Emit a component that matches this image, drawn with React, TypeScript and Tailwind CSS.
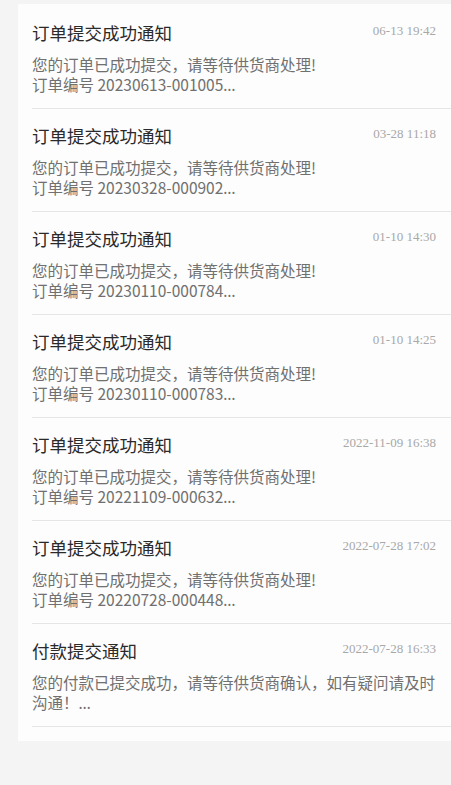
const NOTICES = [
  { title: "订单提交成功通知", time: "06-13 19:42", lines: ["您的订单已成功提交，请等待供货商处理!", "订单编号 20230613-001005"] },
  { title: "订单提交成功通知", time: "03-28 11:18", lines: ["您的订单已成功提交，请等待供货商处理!", "订单编号 20230328-000902"] },
  { title: "订单提交成功通知", time: "01-10 14:30", lines: ["您的订单已成功提交，请等待供货商处理!", "订单编号 20230110-000784"] },
  { title: "订单提交成功通知", time: "01-10 14:25", lines: ["您的订单已成功提交，请等待供货商处理!", "订单编号 20230110-000783"] },
  { title: "订单提交成功通知", time: "2022-11-09 16:38", lines: ["您的订单已成功提交，请等待供货商处理!", "订单编号 20221109-000632"] },
  { title: "订单提交成功通知", time: "2022-07-28 17:02", lines: ["您的订单已成功提交，请等待供货商处理!", "订单编号 20220728-000448"] },
  { title: "付款提交通知", time: "2022-07-28 16:33", lines: ["您的付款已提交成功，请等待供货商确认，如有疑问请及时沟通！"] },
];

function NoticeItem({ title, time, lines }: { title: string; time: string; lines: string[] }) {
  return (
    <div className="ml-[14px] border-b border-[#e6e6e6] pt-[15px] pb-[14px] pr-[15px]">
      <div className="flex items-start justify-between">
        <span className="text-[17.5px] leading-[24px] text-[#2a2a2a]">{title}</span>
        <span className="text-[13px] leading-[20px] text-[#a8a8a8] [font-family:'Liberation_Serif',serif]">
          {time}
        </span>
      </div>
      <div className="mt-[9px] text-[15.5px] leading-[20px] text-[#707070]">
        {lines.map((l, i) => (
          <p key={i}>
            {l}
            {i === lines.length - 1 && (
              <span className="leading-none [font-family:'Noto_Sans',sans-serif]">…</span>
            )}
          </p>
        ))}
      </div>
    </div>
  );
}

export default function App() {
  return (
    <div className="min-h-screen bg-[#f4f4f4] pt-[4px] pl-[18px] [font-family:'Noto_Sans_CJK_SC',sans-serif]">
      <div className="bg-[#fdfdfd] pt-[2px] pb-[14px]">
        {NOTICES.map((n, i) => (
          <NoticeItem key={i} {...n} />
        ))}
      </div>
    </div>
  );
}
